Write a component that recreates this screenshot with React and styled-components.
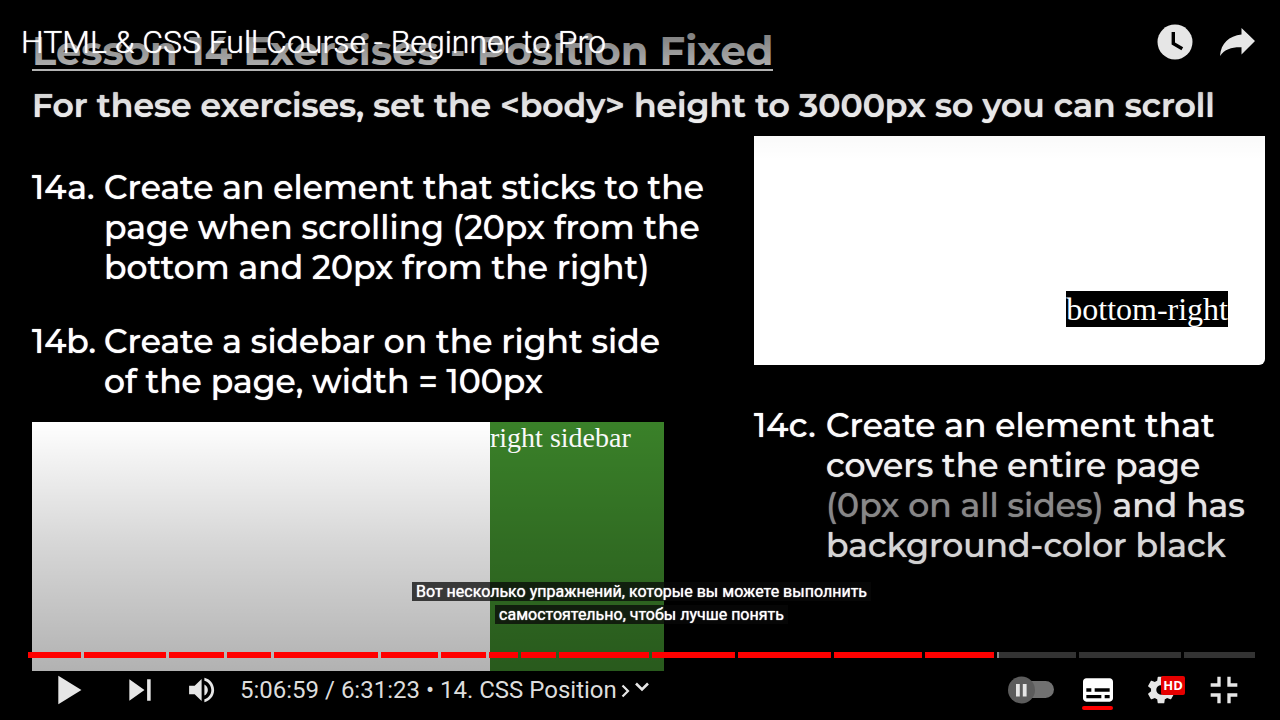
import React from "react";
import styled, { createGlobalStyle } from "styled-components";

const GlobalStyle = createGlobalStyle`
  *, *::before, *::after { box-sizing: border-box; }
  body {
    margin: 0;
    background: #000;
    color: #fff;
    font-family: Roboto, "Liberation Sans", sans-serif;
  }
  h1, h2, p, ul { margin: 0; padding: 0; }
  button { font: inherit; color: inherit; background: none; border: 0; padding: 0; cursor: pointer; }
  svg { display: block; }
`;

const Player = styled.main`
  position: relative;
  min-height: 100vh;
  overflow: hidden;
  background: #000;
`;

/* The lesson slide shown by the video */
const Slide = styled.article`
  padding: 29px 15px 48px 32px;
  font-family: Montserrat, Inter, sans-serif;
  color: #fff;
`;

const SlideTitle = styled.h2`
  width: fit-content;
  height: 42px;
  font-size: 40px;
  line-height: 43px;
  font-weight: 700;
  white-space: nowrap;
  border-bottom: 2px solid #fff;
`;

const SlideNote = styled.p`
  margin-top: 14px;
  font-size: 33px;
  line-height: 40px;
  font-weight: 600;
  white-space: nowrap;
  text-shadow: 0 0 1px currentColor;
`;

const Columns = styled.div`
  display: grid;
  grid-template-columns: 682fr 511fr;
  column-gap: 40px;
  margin-top: 11px;
`;

const Column = styled.div`
  display: flex;
  flex-direction: column;
  min-width: 0;
  padding-top: ${(p) => p.$top || 0}px;
`;

const Exercise = styled.section`
  display: grid;
  grid-template-columns: 72px 1fr;
  font-size: 33px;
  line-height: 40px;
  font-weight: 500;
  white-space: nowrap;
  text-shadow: 0 0 1px currentColor;
  margin-bottom: ${(p) => p.$after || 0}px;
`;

const Aside = styled.span`
  color: #999;
`;

const ScrollDemo = styled.div`
  display: flex;
  justify-content: flex-end;
  align-items: flex-end;
  height: 229px;
  margin-bottom: 40px;
  padding: 0 37px 38px;
  background: #fff;
  border-radius: 0 0 6px 0;
`;

const FixedLabel = styled.span`
  background: #000;
  color: #fff;
  font: 32px/36px "Liberation Serif", serif;
`;

const SidebarDemo = styled.div`
  display: flex;
  justify-content: flex-end;
  height: 249px;
  margin-right: 50px;
  background: #fff;
`;

const Sidebar = styled.div`
  width: 174px;
  background: #3a8129;
  color: #fff;
  font: 28px/32px "Liberation Serif", serif;
`;

/* Player chrome, drawn over the video */
const Chrome = styled.div`
  position: absolute;
  inset: 0;
  display: flex;
  flex-direction: column;
  background:
    linear-gradient(rgba(0, 0, 0, 0.62), rgba(0, 0, 0, 0.48) 38px, rgba(0, 0, 0, 0.32) 66px, rgba(0, 0, 0, 0.11) 105px, rgba(0, 0, 0, 0.02) 136px, transparent 160px),
    linear-gradient(to top, rgba(0, 0, 0, 0.36), rgba(0, 0, 0, 0.3) 50px, rgba(0, 0, 0, 0.16) 175px, transparent 300px);
`;

const TopBar = styled.header`
  display: flex;
  justify-content: space-between;
  align-items: center;
  height: 84px;
  padding: 0 24px 0 21px;
`;

const VideoTitle = styled.h1`
  font-size: 32px;
  line-height: 40px;
  font-weight: 300;
  white-space: nowrap;
  text-shadow: 0 0 1px currentColor;
`;

const TopActions = styled.div`
  display: flex;
  gap: 24px;
`;

const Captions = styled.div`
  display: flex;
  flex-direction: column;
  align-items: center;
  gap: 4px;
  margin: auto 25px 28px 28px;
`;

const CaptionLine = styled.p`
  padding: 0 4px;
  background: rgba(8, 8, 8, 0.75);
  font-size: 16px;
  line-height: 19px;
  font-weight: 400;
  color: #fff;
  text-shadow: 0 0 1px currentColor;
`;

const Progress = styled.div`
  position: relative;
  display: flex;
  gap: 3px;
  height: 6px;
  margin: 0 25px 0 28px;
`;

const Chapter = styled.div`
  flex: ${(p) => p.$length} 1 0;
  background: ${(p) => (p.$played ? "#f00" : "#333")};
  box-shadow: ${(p) => (p.$buffered ? "inset 2px 0 #888" : "none")};
`;

const Seek = styled.input`
  position: absolute;
  inset: 0;
  width: 100%;
  height: 100%;
  margin: 0;
  opacity: 0;
  cursor: pointer;
`;

const Controls = styled.footer`
  display: flex;
  justify-content: space-between;
  align-items: center;
  height: 62px;
  padding: 2px 25px 0 36px;
  color: #e6e6e6;
`;

const Group = styled.div`
  display: flex;
  align-items: center;
`;

const ControlButton = styled.button`
  position: relative;
  display: flex;
  justify-content: center;
  align-items: center;
  width: ${(p) => p.$width}px;
  height: 60px;
  color: ${(p) => (p.$active ? "#fff" : "#e6e6e6")};
  &::after {
    content: "";
    display: ${(p) => (p.$active ? "block" : "none")};
    position: absolute;
    left: 16px;
    right: 16px;
    bottom: 10px;
    height: 4px;
    border-radius: 2px;
    background: #f00;
  }
`;

const Time = styled.span`
  margin-left: 12px;
  font-size: 24px;
  line-height: 28px;
  color: #ddd;
  white-space: pre;
`;

const ChapterButton = styled.button`
  display: flex;
  align-items: center;
  font-size: 24px;
  line-height: 28px;
  color: #ddd;
  white-space: nowrap;
`;

const HdBadge = styled.span`
  position: absolute;
  top: 16px;
  left: 32px;
  width: 24px;
  height: 19px;
  border-radius: 2px;
  background: #e60000;
  color: #fff;
  font: 700 13px/19px "Open Sans", sans-serif;
  text-align: center;
`;

const chapters = [53, 82, 55, 44, 104, 57, 45, 29, 35, 90, 83, 93, 88, 69, 79, 102, 71];
const CURRENT = 13;

function Glyph({ size, d }) {
  return (
    <svg width={size} height={size} viewBox="0 0 36 36" fill="currentColor" fillRule="evenodd" aria-hidden="true">
      <path d={d} />
    </svg>
  );
}

const icons = {
  play: "M12 26V10L25 18Z",
  next: "M12 24 20.5 18 12 12ZM22 12v12h2V12Z",
  volume:
    "M8 21H12L17 26V10L12 15H8ZM19 14V22C20.48 21.32 21.5 19.77 21.5 18 21.5 16.26 20.48 14.74 19 14ZM19 11.29C21.89 12.15 24 14.83 24 18 24 21.17 21.89 23.85 19 24.71V26.77C23.01 25.86 26 22.28 26 18 26 13.72 23.01 10.14 19 9.23Z",
  subtitles:
    "M11 11C9.89 11 9 11.9 9 13V23C9 24.1 9.89 25 11 25H25C26.1 25 27 24.1 27 23V13C27 11.9 26.1 11 25 11ZM11 17H14V19H11ZM20 23H11V21H20ZM25 23H22V21H25ZM25 19H16V17H25Z",
  settings:
    "m 23.94,18.78 c .03,-0.25 .05,-0.51 .05,-0.78 0,-0.27 -0.02,-0.52 -0.05,-0.78 l 1.68,-1.32 c .15,-0.12 .19,-0.33 .09,-0.51 l -1.6,-2.76 c -0.09,-0.17 -0.31,-0.24 -0.48,-0.17 l -1.99,.8 c -0.41,-0.32 -0.86,-0.58 -1.35,-0.78 l -0.30,-2.12 c -0.02,-0.19 -0.19,-0.33 -0.39,-0.33 l -3.2,0 c -0.2,0 -0.36,.14 -0.39,.33 l -0.30,2.12 c -0.48,.2 -0.93,.47 -1.35,.78 l -1.99,-0.8 c -0.18,-0.07 -0.39,0 -0.48,.17 l -1.6,2.76 c -0.10,.17 -0.05,.39 .09,.51 l 1.68,1.32 c -0.03,.25 -0.05,.52 -0.05,.78 0,.26 .02,.52 .05,.78 l -1.68,1.32 c -0.15,.12 -0.19,.33 -0.09,.51 l 1.6,2.76 c .09,.17 .31,.24 .48,.17 l 1.99,-0.8 c .41,.32 .86,.58 1.35,.78 l .30,2.12 c .02,.19 .19,.33 .39,.33 l 3.2,0 c .2,0 .36,-0.14 .39,-0.33 l .30,-2.12 c .48,-0.2 .93,-0.47 1.35,-0.78 l 1.99,.8 c .18,.07 .39,0 .48,-0.17 l 1.6,-2.76 c .09,-0.17 .05,-0.39 -0.09,-0.51 l -1.68,-1.32 z m -5.94,2.01 c -1.54,0 -2.8,-1.25 -2.8,-2.8 0,-1.54 1.25,-2.8 2.8,-2.8 1.54,0 2.8,1.25 2.8,2.8 0,1.54 -1.25,2.8 -2.8,2.8 z",
  exitFullscreen: "M14 14h-4v2h6v-6h-2ZM22 14v-4h-2v6h6v-2ZM20 26h2v-4h4v-2h-6ZM10 22h4v4h2v-6h-6Z",
};

export default function App() {
  return (
    <Player>
      <GlobalStyle />
      <Slide>
        <SlideTitle>Lesson 14 Exercises - Position Fixed</SlideTitle>
        <SlideNote>For these exercises, set the &lt;body&gt; height to 3000px so you can scroll</SlideNote>
        <Columns>
          <Column $top={31}>
            <Exercise $after={34}>
              <span>14a.</span>
              <p>
                Create an element that sticks to the
                <br />
                page when scrolling (20px from the
                <br />
                bottom and 20px from the right)
              </p>
            </Exercise>
            <Exercise $after={21}>
              <span>14b.</span>
              <p>
                Create a sidebar on the right side
                <br />
                of the page, width = 100px
              </p>
            </Exercise>
            <SidebarDemo>
              <Sidebar>right sidebar</Sidebar>
            </SidebarDemo>
          </Column>
          <Column>
            <ScrollDemo>
              <FixedLabel>bottom-right</FixedLabel>
            </ScrollDemo>
            <Exercise>
              <span>14c.</span>
              <p>
                Create an element that
                <br />
                covers the entire page
                <br />
                <Aside>(0px on all sides)</Aside> and has
                <br />
                background-color black
              </p>
            </Exercise>
          </Column>
        </Columns>
      </Slide>

      <Chrome>
        <TopBar>
          <VideoTitle>HTML &amp; CSS Full Course - Beginner to Pro</VideoTitle>
          <TopActions>
            <button type="button" aria-label="Watch later">
              <svg width="38" height="38" viewBox="0 0 38 38" aria-hidden="true">
                <circle cx="19" cy="19" r="17.5" fill="#e6e6e6" />
                <path d="M17.3 9v11.5l9 5.2" fill="none" stroke="#000" strokeWidth="3.4" />
              </svg>
            </button>
            <button type="button" aria-label="Share">
              <svg width="38" height="38" viewBox="0 0 38 38" aria-hidden="true">
                <path d="M37 18 23.5 5V11.5C11 13 3 20 2 33 7 26 14 24 23.5 24.3V31.5Z" fill="#e6e6e6" />
              </svg>
            </button>
          </TopActions>
        </TopBar>

        <Captions>
          <CaptionLine>Вот несколько упражнений, которые вы можете выполнить</CaptionLine>
          <CaptionLine>самостоятельно, чтобы лучше понять</CaptionLine>
        </Captions>

        <Progress>
          {chapters.map((length, i) => (
            <Chapter key={i} $length={length} $played={i <= CURRENT} $buffered={i === CURRENT + 1} />
          ))}
          <Seek type="range" min="0" max="23483" defaultValue="18419" aria-label="Seek" />
        </Progress>

        <Controls>
          <Group>
            <ControlButton type="button" $width={66} aria-label="Play">
              <Glyph size={64} d={icons.play} />
            </ControlButton>
            <ControlButton type="button" $width={76} aria-label="Next">
              <Glyph size={64} d={icons.next} />
            </ControlButton>
            <ControlButton type="button" $width={50} aria-label="Mute">
              <Glyph size={50} d={icons.volume} />
            </ControlButton>
            <Time>5:06:59 / 6:31:23 • </Time>
            <ChapterButton type="button">
              14. CSS Position
              <svg width="32" height="24" viewBox="0 0 32 24" fill="none" stroke="#e6e6e6" aria-hidden="true">
                <path d="M5.5 7.5 11 13 5.5 18.5" strokeWidth="2.2" />
                <path d="M19 5.5 25 11.5 31 5.5" strokeWidth="2.6" />
              </svg>
            </ChapterButton>
          </Group>
          <Group>
            <ControlButton type="button" $width={71} aria-label="Autoplay">
              <svg width="46" height="28" viewBox="0 0 46 28" aria-hidden="true">
                <rect x="5" y="5" width="41" height="17" rx="8.5" fill="#717171" />
                <circle cx="13.5" cy="14" r="13.5" fill="#5c5c5c" />
                <path d="M8 8h3.8v12.5H8ZM14.8 8h3.8v12.5h-3.8Z" fill="#e6e6e6" />
              </svg>
            </ControlButton>
            <ControlButton type="button" $width={63} $active aria-label="Subtitles">
              <Glyph size={60} d={icons.subtitles} />
            </ControlButton>
            <ControlButton type="button" $width={63} aria-label="Settings">
              <Glyph size={60} d={icons.settings} />
              <HdBadge>HD</HdBadge>
            </ControlButton>
            <ControlButton type="button" $width={63} aria-label="Exit full screen">
              <Glyph size={60} d={icons.exitFullscreen} />
            </ControlButton>
          </Group>
        </Controls>
      </Chrome>
    </Player>
  );
}
